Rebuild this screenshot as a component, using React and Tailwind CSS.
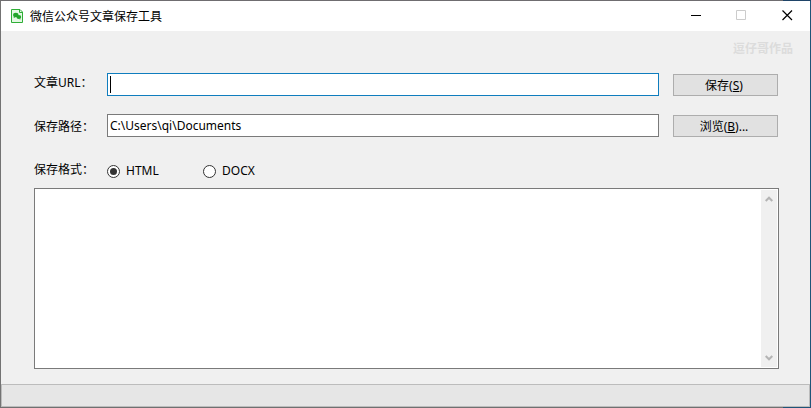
import { useState } from 'react'

const FORMATS = ['HTML', 'DOCX']

function AppIcon() {
  return (
    <svg className="h-4 w-4 shrink-0" viewBox="0 0 16 16" aria-hidden="true">
      <path d="M2.5 1.5h8.5l2.5 2.5v10.5h-11z" fill="#e4f8e4" stroke="#2fae37" />
      <path d="M10.5 1.5v3h3" fill="none" stroke="#2fae37" />
      <ellipse cx="6.8" cy="7" rx="2.7" ry="2.2" fill="#22a52b" />
      <ellipse cx="9.8" cy="9" rx="2.4" ry="1.9" fill="#22a52b" />
      <path d="M5 8.5l-.4 1.5 1.8-.8zM11.2 10.4l.3 1.2-1.6-.7z" fill="#22a52b" />
    </svg>
  )
}

function TitleBar() {
  return (
    <header className="flex h-[30px] items-center bg-white pl-2">
      <AppIcon />
      <h1 className="ml-[5px] flex-1 pt-px">微信公众号文章保存工具</h1>
      <button type="button" aria-label="最小化" className="grid h-full w-[45px] place-items-center pb-px">
        <svg className="h-[11px] w-[11px]" viewBox="0 0 11 11" stroke="#000" shapeRendering="crispEdges">
          <path d="M0 5.5h10" />
        </svg>
      </button>
      <button type="button" aria-label="最大化" disabled className="grid h-full w-[45px] place-items-center pb-px">
        <svg className="h-[11px] w-[11px]" viewBox="0 0 11 11" fill="none" stroke="#ccc">
          <path d="M.5 .5h9v9h-9z" />
        </svg>
      </button>
      <button type="button" aria-label="关闭" className="grid h-full w-[46px] place-items-center pb-px">
        <svg className="h-[11px] w-[11px]" viewBox="0 0 11 11" fill="none" stroke="#000" strokeWidth="1.2">
          <path d="M.5 .5l9.5 9.5M10 .5L.5 10" />
        </svg>
      </button>
    </header>
  )
}

function PushButton({ text, accessKey, suffix = '' }) {
  return (
    <button
      type="button"
      accessKey={accessKey.toLowerCase()}
      className="mr-px h-[22px] border border-[#adadad] bg-[#e1e1e1] pt-px pr-[3px] leading-5"
    >
      {text}(<span className="underline">{accessKey}</span>){suffix}
    </button>
  )
}

function Chevron({ down }) {
  return (
    <svg className="h-2 w-2" viewBox="0 0 8 8" fill="none" stroke="#b4b4b4" strokeWidth="2">
      <path d={down ? 'M.7 2l3.3 3.3L7.3 2' : 'M.7 6l3.3-3.3L7.3 6'} />
    </svg>
  )
}

export default function App() {
  const [url, setUrl] = useState('')
  const [path, setPath] = useState('C:\\Users\\qi\\Documents')
  const [format, setFormat] = useState('HTML')

  return (
    <div className="flex min-h-screen flex-col bg-[#f0f0f0] font-['Noto_Sans','Noto_Sans_CJK_SC',sans-serif] text-[12px] leading-4 text-black">
      {/* window edge, the desktop shows along the right */}
      <div className="flex h-px">
        <div className="flex-1 bg-[#6f6d70]" />
        <div className="w-7 bg-[#1f4468]" />
      </div>
      <div className="flex flex-1 flex-col border-l border-r border-l-[#737373] border-r-[#1f5478]">
        <TitleBar />

        <main className="flex flex-1 flex-col pr-[31px] pb-[15px] pl-[33px]">
          <p className="mt-[10px] mb-4 -mr-[14px] self-end font-bold text-[#dcdcdc]">逗仔哥作品</p>

          <div className="grid grid-cols-[73px_1fr_106px] items-center gap-y-[18px]">
            <label htmlFor="url" className="pb-1">文章URL：</label>
            <div className="relative mr-[14px]">
              <input
                id="url"
                type="text"
                value={url}
                onChange={(e) => setUrl(e.target.value)}
                className="block h-[23px] w-full border border-[#0f7dbe] bg-white px-[2px] outline-none"
              />
              {!url && <span className="pointer-events-none absolute top-[3px] left-[3px] h-[17px] w-px bg-black" />}
            </div>
            <PushButton text="保存" accessKey="S" />

            <label htmlFor="path" className="pt-[2px]">保存路径：</label>
            <input
              id="path"
              type="text"
              value={path}
              onChange={(e) => setPath(e.target.value)}
              className="mr-[14px] block h-[23px] border border-[#7a7a7a] bg-white px-[2px] outline-none"
            />
            <PushButton text="浏览" accessKey="B" suffix="..." />
          </div>

          <fieldset className="mt-[25px] mb-[6px] flex h-5 items-center">
            <span id="format-label" className="w-[73px] pb-[2px]">保存格式：</span>
            <div role="radiogroup" aria-labelledby="format-label" className="flex">
              {FORMATS.map((f) => (
                <label key={f} className="flex w-24 items-center gap-[6px]">
                  <input
                    type="radio"
                    name="format"
                    value={f}
                    checked={format === f}
                    onChange={() => setFormat(f)}
                    className="grid h-[13px] w-[13px] appearance-none place-items-center rounded-full border border-[#333] bg-white before:h-[7px] before:w-[7px] before:rounded-full checked:before:bg-[#333]"
                  />
                  <span>{f}</span>
                </label>
              ))}
            </div>
          </fieldset>

          <div className="flex flex-1 border border-[#7a7a7a] bg-white p-px">
            <textarea aria-label="日志" readOnly className="flex-1 resize-none outline-none" />
            <div className="flex w-4 flex-col items-center justify-between bg-[#f0f0f0] py-[5px]">
              <button type="button" aria-label="向上滚动"><Chevron /></button>
              <button type="button" aria-label="向下滚动"><Chevron down /></button>
            </div>
          </div>
        </main>

        <footer className="h-[23px] border border-[#bcbcbc] bg-[#e6e6e6]" />
      </div>
      <div className="flex h-px">
        <div className="flex-1 bg-[#707070]" />
        <div className="w-7 bg-[#1f5478]" />
      </div>
    </div>
  )
}
